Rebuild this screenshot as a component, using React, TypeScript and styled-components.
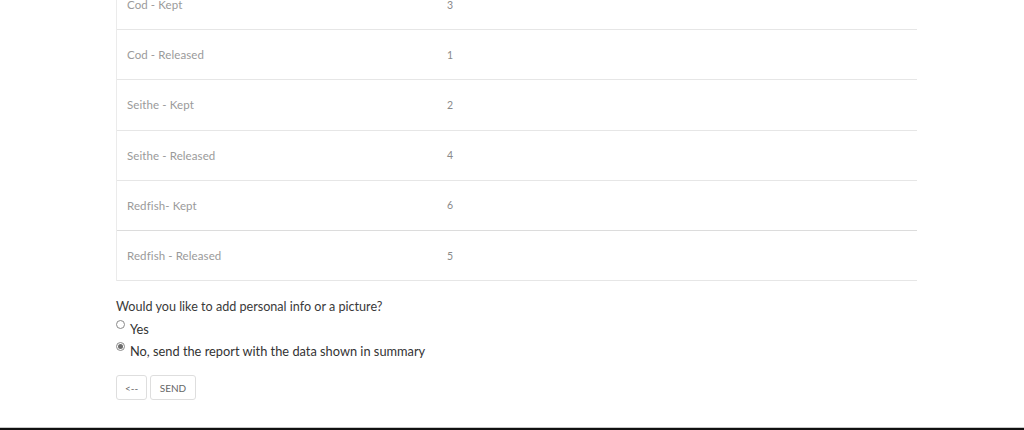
import React from "react";
import styled, { createGlobalStyle } from "styled-components";

const Global = createGlobalStyle`
  html, body { margin: 0; padding: 0; background: #fff; }
  body { font-family: "Lato", "Open Sans", sans-serif; overflow: hidden; }
`;

const Page = styled.div`
  height: 430px;
  display: flex;
  flex-direction: column;
  overflow: hidden;
`;

const Content = styled.div`
  flex: 1;
  margin-top: -20px;
  padding-left: 116px;
  width: 800px;
`;

const Table = styled.div`
  border-left: 1px solid #ebebeb;
  width: 800px;
`;

const Row = styled.div<{ $strong?: boolean }>`
  display: grid;
  grid-template-columns: 320px 1fr;
  height: 49.2px;
  align-items: center;
  border-bottom: 1px solid ${(p) => (p.$strong ? "#dcdcdc" : "#e6e6e6")};
`;

const Cell = styled.div`
  padding-left: 10px;
  font-size: 11.5px;
  color: #9a9a9a;
  letter-spacing: 0.1px;
`;

const Num = styled(Cell)`
  color: #8a8a8a;
  font-size: 10.5px;
`;

const Question = styled.div`
  margin-top: 18px;
  font-size: 12.6px;
  color: #3a3a3a;
`;

const Option = styled.label`
  display: flex;
  align-items: flex-start;
  gap: 5px;
  margin-top: 4px;
  font-size: 12.8px;
  color: #333;
  height: 18px;
`;

const Radio = styled.span<{ $checked?: boolean }>`
  width: 7px;
  height: 7px;
  margin-top: 2px;
  border-radius: 50%;
  border: 1px solid #8a8a8a;
  background: #fff;
  box-sizing: content-box;
  display: inline-flex;
  align-items: center;
  justify-content: center;
  &::after {
    content: "";
    width: 5px;
    height: 5px;
    border-radius: 50%;
    background: ${(p) => (p.$checked ? "#6c6c6c" : "transparent")};
  }
`;

const OptText = styled.span`
  margin-top: 3px;
`;

const Buttons = styled.div`
  display: flex;
  gap: 3px;
  margin-top: 17px;
`;

const Btn = styled.button<{ $w: number }>`
  width: ${(p) => p.$w}px;
  height: 25px;
  border: 1px solid #dedede;
  border-radius: 3px;
  background: #fff;
  font-family: "Lato", sans-serif;
  font-size: 10px;
  color: #666;
  padding: 0;
`;

const Footer = styled.div`
  height: 2px;
  border-top: 1px solid #c8c8c8;
  background: #111;
`;

const rows = [
  ["Cod - Kept", "3"],
  ["Cod - Released", "1"],
  ["Seithe - Kept", "2"],
  ["Seithe - Released", "4"],
  ["Redfish- Kept", "6"],
  ["Redfish - Released", "5"],
];

export default function App() {
  return (
    <Page>
      <Global />
      <Content>
        <Table>
          {rows.map(([label, n], i) => (
            <Row key={label} $strong={i === 4}>
              <Cell>{label}</Cell>
              <Num>{n}</Num>
            </Row>
          ))}
        </Table>
        <Question>Would you like to add personal info or a picture?</Question>
        <Option>
          <Radio />
          <OptText>Yes</OptText>
        </Option>
        <Option>
          <Radio $checked />
          <OptText>No, send the report with the data shown in summary</OptText>
        </Option>
        <Buttons>
          <Btn $w={31}>&lt;--</Btn>
          <Btn $w={46}>SEND</Btn>
        </Buttons>
      </Content>
      <Footer />
    </Page>
  );
}
